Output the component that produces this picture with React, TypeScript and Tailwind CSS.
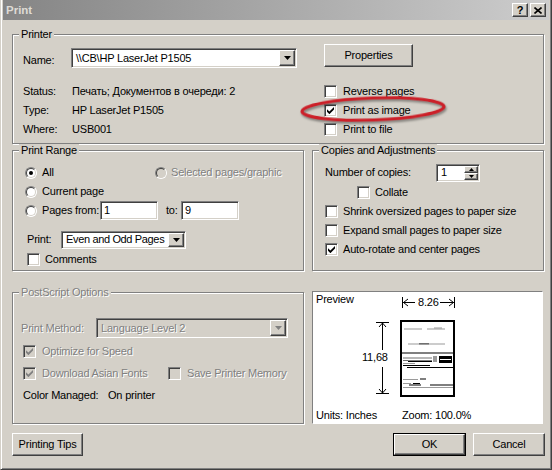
import React from "react";

const raised =
  "bg-[#d4d0c8] border border-t-white border-l-white border-r-[#404040] border-b-[#404040] shadow-[inset_-1px_-1px_0_#808080]";
const sunken =
  "border border-t-[#808080] border-l-[#808080] border-r-white border-b-white shadow-[inset_1px_1px_0_#404040,inset_-1px_-1px_0_#d4d0c8]";
const etched = "border border-[#808080] shadow-[inset_1px_1px_0_#fff,1px_1px_0_#fff]";
const dim = "text-[#808080] [text-shadow:1px_1px_0_#fff]";

function Check({ checked = false, disabled = false }: { checked?: boolean; disabled?: boolean }) {
  return (
    <span
      className={`flex h-[13px] w-[13px] shrink-0 items-center justify-center ${sunken} ${
        disabled ? "bg-[#d4d0c8]" : "bg-white"
      }`}
    >
      {checked && (
        <svg width="7" height="7" viewBox="0 0 7 7">
          <path d="M0 2.2 L2.4 4.6 L7 0 V2.6 L2.4 7.2 L0 4.8 Z" fill={disabled ? "#808080" : "#000"} />
        </svg>
      )}
    </span>
  );
}

function Radio({ checked = false, disabled = false }: { checked?: boolean; disabled?: boolean }) {
  return (
    <span
      className={`relative flex h-[12px] w-[12px] shrink-0 items-center justify-center rounded-full border border-t-[#808080] border-l-[#808080] border-r-white border-b-white ${
        disabled ? "bg-[#d4d0c8]" : "bg-white"
      }`}
    >
      <span className="absolute inset-0 rounded-full border border-t-[#404040] border-l-[#404040] border-r-[#d4d0c8] border-b-[#d4d0c8]" />
      {checked && <span className="h-[4px] w-[4px] rounded-full bg-black" />}
    </span>
  );
}

function Arrow({ disabled = false }: { disabled?: boolean }) {
  return (
    <span className={`flex w-[16px] shrink-0 items-center justify-center ${raised}`}>
      <svg width="7" height="4" viewBox="0 0 7 4">
        <path d="M0 0 H7 L3.5 4 Z" fill={disabled ? "#808080" : "#000"} />
      </svg>
    </span>
  );
}

function Combo({ text, className, disabled = false }: { text: string; className: string; disabled?: boolean }) {
  return (
    <div className={`flex p-[1px] ${sunken} ${disabled ? "bg-[#d4d0c8]" : "bg-white"} ${className}`}>
      <span className={`flex flex-1 items-center overflow-hidden whitespace-nowrap pl-[3px] ${disabled ? dim : ""}`}>
        {text}
      </span>
      <Arrow disabled={disabled} />
    </div>
  );
}

function Field({ text, className }: { text: string; className: string }) {
  return <div className={`flex items-center bg-white pl-[3px] ${sunken} ${className}`}>{text}</div>;
}

function Btn({ children, className, def = false }: { children: React.ReactNode; className: string; def?: boolean }) {
  const inner = <div className={`flex h-full w-full items-center justify-center ${raised}`}>{children}</div>;
  return def ? <div className={`border border-black ${className}`}>{inner}</div> : <div className={className}>{inner}</div>;
}

function Group({ title, className, disabled = false, children }: { title: string; className: string; disabled?: boolean; children: React.ReactNode }) {
  return (
    <fieldset className={`${etched} ${className}`}>
      <legend className={`ml-[6px] bg-[#d4d0c8] px-[2px] leading-[13px] ${disabled ? dim : ""}`}>{title}</legend>
      {children}
    </fieldset>
  );
}

function CheckRow({ label, checked, disabled, className = "" }: { label: string; checked?: boolean; disabled?: boolean; className?: string }) {
  return (
    <div className={`flex h-[19px] items-center gap-[5px] ${className}`}>
      <Check checked={checked} disabled={disabled} />
      <span className={disabled ? dim : ""}>{label}</span>
    </div>
  );
}

function RadioRow({ label, checked, disabled }: { label: string; checked?: boolean; disabled?: boolean }) {
  return (
    <div className="flex items-center gap-[5px]">
      <Radio checked={checked} disabled={disabled} />
      <span className={disabled ? dim : ""}>{label}</span>
    </div>
  );
}

function PagePreview() {
  return (
    <svg className="absolute left-0 top-0" width="229" height="131" viewBox="0 0 229 131">
      {/* dimensions */}
      <g stroke="#000" strokeWidth="1" fill="none">
        <path d="M89.5 5 V16 M141.5 5 V16" />
        <path d="M90 10.5 H102 M127 10.5 H141" />
        <path d="M95 7 L90.5 10.5 L95 14 M136 7 L140.5 10.5 L136 14" />
        <path d="M63 30.5 H76 M63 101.5 H76" />
        <path d="M69.5 31 V58 M69.5 75 V101" />
        <path d="M66 35 L69.5 31 L73 35 M66 97 L69.5 101 L73 97" />
      </g>
      {/* page */}
      <g transform="translate(87 28)">
        <rect x="1" y="1" width="53" height="75" fill="#fff" stroke="#000" strokeWidth="2" />
        <g fill="#9a9a9a">
          <rect x="4" y="8.5" width="18" height="1" />
          <rect x="27" y="8.5" width="18" height="1" />
          <rect x="34" y="7.5" width="8" height="1" />
          <rect x="8" y="23.5" width="37" height="1" />
          <rect x="3" y="59" width="15" height="1" />
          <rect x="3" y="63" width="8" height="1" />
          <rect x="3" y="67" width="50" height="1" />
          <rect x="33" y="36" width="4" height="6" />
          <rect x="3" y="43" width="12" height="1" />
        </g>
        <g fill="#707070">
          <rect x="19" y="23" width="10" height="1.5" />
          <rect x="3" y="37.5" width="29" height="1" />
          <rect x="3" y="40" width="5" height="1" />
        </g>
        <g fill="#000">
          <rect x="2" y="32.5" width="51" height="1" />
          <rect x="8" y="40.5" width="24" height="1.5" />
          <rect x="3" y="45" width="27" height="1" />
          <rect x="7" y="47" width="46" height="1" />
          <rect x="39" y="36" width="13" height="7" />
          <rect x="20" y="58.5" width="6" height="1" />
          <rect x="13" y="63" width="7" height="1" />
          <rect x="9" y="64.5" width="12" height="1" />
          <rect x="30" y="64.5" width="23" height="1" />
        </g>
        <rect x="40" y="39" width="11" height="1" fill="#fff" />
      </g>
    </svg>
  );
}

export default function App() {
  return (
    <div className="relative flex h-[470px] w-[552px] flex-col border-x border-b border-l-[#d4d0c8] border-r-[#404040] border-b-[#404040] bg-[#d4d0c8] px-[2px] pb-[2px] font-['Liberation_Sans',Arial,sans-serif] text-[11px] leading-[13px] tracking-[-0.2px] text-black shadow-[inset_1px_0_0_#fff,inset_-1px_-1px_0_#808080]">
      {/* title bar */}
      <div className="flex h-[20px] shrink-0 items-center bg-gradient-to-r from-[#858585] to-[#cdcdcd] pl-[3px] pr-[3px]">
        <span className="flex-1 text-[11.5px] font-bold tracking-normal text-[#dedbd5]">Print</span>
        <div className="flex gap-[2px]">
          <div className={`flex h-[14px] w-[16px] items-center justify-center text-[11px] font-bold leading-none ${raised}`}>?</div>
          <div className={`flex h-[14px] w-[16px] items-center justify-center ${raised}`}>
            <svg width="8" height="7" viewBox="0 0 8 7">
              <path d="M0.5 0.5 L7.5 6.5 M7.5 0.5 L0.5 6.5" stroke="#000" strokeWidth="1.6" />
            </svg>
          </div>
        </div>
      </div>

      <div className="flex flex-col pl-[9px]">
        {/* Printer */}
        <Group title="Printer" className="mt-[8px] h-[116px] w-[532px]">
          <div className="pl-[10px] pt-[3px]">
            <div className="flex items-start">
              <div className="mt-[4px] flex h-[20px] items-center">
                <span className="mt-[4px] w-[48px]">Name:</span>
                <Combo text={"\\\\CB\\HP LaserJet P1505"} className="h-[20px] w-[226px]" />
              </div>
              <Btn className="ml-[27px] h-[23px] w-[89px]">Properties</Btn>
            </div>
            <div className="mt-[14px] grid grid-cols-[301px_1fr]">
              <div className="flex flex-col">
                <div className="flex h-[19px] items-center">
                  <span className="w-[49px]">Status:</span>
                  <span>Печать; Документов в очереди: 2</span>
                </div>
                <div className="flex h-[19px] items-center">
                  <span className="w-[49px]">Type:</span>
                  <span>HP LaserJet P1505</span>
                </div>
                <div className="flex h-[19px] items-center">
                  <span className="w-[49px]">Where:</span>
                  <span>USB001</span>
                </div>
              </div>
              <div className="flex flex-col">
                <CheckRow label="Reverse pages" className="gap-[6px]" />
                <CheckRow label="Print as image" checked className="gap-[6px]" />
                <CheckRow label="Print to file" className="gap-[6px]" />
              </div>
            </div>
          </div>
        </Group>

        <div className="flex gap-[8px]">
          {/* Print Range */}
          <Group title="Print Range" className="h-[127px] w-[292px]">
            <div className="flex flex-col pl-[12px] pt-[6px]">
              <div className="flex h-[19px] items-center">
                <div className="w-[130px]">
                  <RadioRow label="All" checked />
                </div>
                <div className="flex items-center gap-[4px]">
                  <Radio disabled />
                  <span className={dim}>Selected pages/graphic</span>
                </div>
              </div>
              <div className="flex h-[19px] items-center">
                <RadioRow label="Current page" />
              </div>
              <div className="flex h-[19px] items-center">
                <Radio />
                <span className="ml-[5px] w-[58px]">Pages from:</span>
                <Field text="1" className="h-[19px] w-[58px]" />
                <span className="ml-[8px] w-[15px]">to:</span>
                <Field text="9" className="h-[19px] w-[58px]" />
              </div>
              <div className="mt-[10px] flex h-[19px] items-center pl-[2px]">
                <span className="w-[34px]">Print:</span>
                <Combo text="Even and Odd Pages" className="h-[18px] w-[125px] tracking-[-0.35px]" />
              </div>
              <CheckRow label="Comments" className="mt-[1px] pl-[2px]" />
            </div>
          </Group>

          {/* Copies and Adjustments */}
          <Group title="Copies and Adjustments" className="h-[127px] w-[232px]">
            <div className="flex flex-col pl-[12px] pt-[6px]">
              <div className="flex h-[19px] items-center">
                <span className="w-[111px]">Number of copies:</span>
                <div className={`flex h-[18px] w-[44px] bg-white p-[1px] ${sunken}`}>
                  <span className="flex flex-1 items-center pl-[3px]">1</span>
                  <div className="flex w-[14px] flex-col">
                    <div className={`flex flex-1 items-center justify-center ${raised}`}>
                      <svg width="5" height="3" viewBox="0 0 5 3">
                        <path d="M0 3 H5 L2.5 0 Z" fill="#000" />
                      </svg>
                    </div>
                    <div className={`flex flex-1 items-center justify-center ${raised}`}>
                      <svg width="5" height="3" viewBox="0 0 5 3">
                        <path d="M0 0 H5 L2.5 3 Z" fill="#000" />
                      </svg>
                    </div>
                  </div>
                </div>
              </div>
              <CheckRow label="Collate" className="mt-[1px] pl-[32px]" />
              <CheckRow label="Shrink oversized pages to paper size" />
              <CheckRow label="Expand small pages to paper size" />
              <CheckRow label="Auto-rotate and center pages" checked />
            </div>
          </Group>
        </div>

        <div className="mt-[15px] flex gap-[8px]">
          {/* PostScript Options */}
          <Group title="PostScript Options" disabled className="h-[138px] w-[292px]">
            <div className="flex flex-col pl-[8px] pt-[19px]">
              <div className="flex h-[20px] items-center">
                <span className={`w-[75px] ${dim}`}>Print Method:</span>
                <Combo text="Language Level 2" disabled className="h-[20px] w-[192px]" />
              </div>
              <CheckRow label="Optimize for Speed" checked disabled className="mt-[4px] gap-[6px] pl-[2px]" />
              <div className="mt-[3px] flex h-[19px] items-center pl-[2px]">
                <div className="flex w-[145px] items-center gap-[6px]">
                  <Check checked disabled />
                  <span className={dim}>Download Asian Fonts</span>
                </div>
                <div className="flex items-center gap-[6px]">
                  <Check disabled />
                  <span className={dim}>Save Printer Memory</span>
                </div>
              </div>
              <div className="mt-[3px] flex h-[19px] items-center pl-[2px]">
                <span className="w-[85px]">Color Managed:</span>
                <span>On printer</span>
              </div>
            </div>
          </Group>

          {/* Preview */}
          <div className="relative mt-[5px] flex h-[133px] w-[231px] flex-col justify-between border border-t-[#808080] border-l-[#808080] border-r-white border-b-white bg-white">
            <PagePreview />
            <span className="relative pl-[3px] pt-[1px]">Preview</span>
            <span className="absolute left-[104px] top-[4px] bg-white px-[1px]">8.26</span>
            <span className="absolute left-[49px] top-[59px] bg-white">11,68</span>
            <div className="relative flex pb-[1px] pl-[3px]">
              <span className="w-[86px]">Units: Inches</span>
              <span>Zoom: 100.0%</span>
            </div>
          </div>
        </div>

        {/* buttons */}
        <div className="mt-[9px] flex h-[23px] items-center">
          <Btn className="h-[23px] w-[71px]">Printing Tips</Btn>
          <div className="flex-1" />
          <Btn def className="h-[23px] w-[73px]">OK</Btn>
          <Btn className="ml-[7px] mr-[4px] h-[23px] w-[72px]">Cancel</Btn>
        </div>
      </div>

      {/* annotation */}
      <svg
        className="pointer-events-none absolute left-[297px] top-[94px] -rotate-2 drop-shadow-[1px_2px_1px_rgba(0,0,0,0.4)]"
        width="150"
        height="30"
        viewBox="0 0 150 30"
      >
        <ellipse cx="75" cy="15" rx="71" ry="11" fill="none" stroke="#cc1f28" strokeWidth="3.2" />
      </svg>
    </div>
  );
}
